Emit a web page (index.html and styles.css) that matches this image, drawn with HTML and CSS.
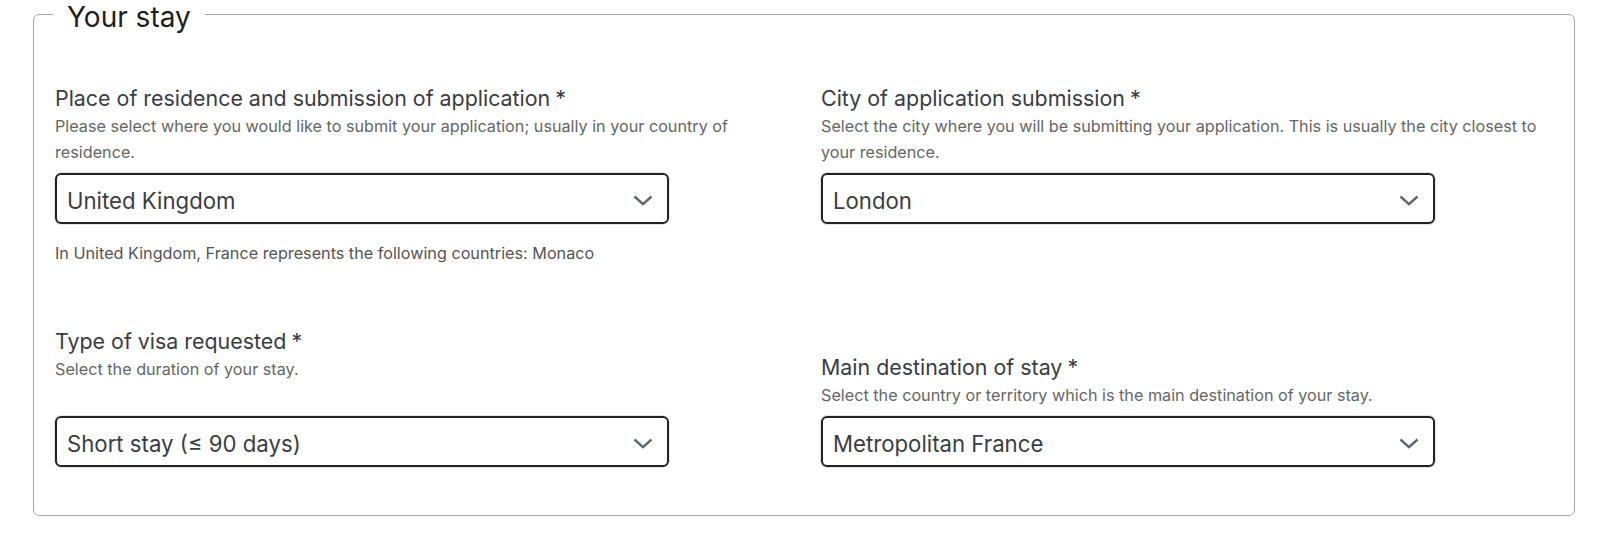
FILE: index.html
```html
<!DOCTYPE html>
<html lang="en">
<head>
<meta charset="utf-8">
<title>Your stay</title>
<link rel="stylesheet" href="styles.css">
</head>
<body>
<div class="page">
  <fieldset class="stay">
    <legend class="stay__title">Your stay</legend>
    <div class="grid">
      <div class="field">
        <label class="field__label">Place of residence and submission of application<span class="req">*</span></label>
        <p class="field__hint">Please select where you would like to submit your application; usually in your country of residence.</p>
        <div class="select">
          <span class="select__value">United Kingdom</span>
          <svg class="select__chevron" width="20" height="11" viewBox="0 0 20 11"><path d="M1.5 1.5 L10 9.2 L18.5 1.5" fill="none" stroke="currentColor" stroke-width="2.4"/></svg>
        </div>
        <p class="field__note">In United Kingdom, France represents the following countries: Monaco</p>
      </div>
      <div class="field">
        <label class="field__label">City of application submission<span class="req">*</span></label>
        <p class="field__hint">Select the city where you will be submitting your application. This is usually the city closest to your residence.</p>
        <div class="select">
          <span class="select__value">London</span>
          <svg class="select__chevron" width="20" height="11" viewBox="0 0 20 11"><path d="M1.5 1.5 L10 9.2 L18.5 1.5" fill="none" stroke="currentColor" stroke-width="2.4"/></svg>
        </div>
      </div>
      <div class="field field--end">
        <label class="field__label">Type of visa requested<span class="req">*</span></label>
        <p class="field__hint field__hint--tall">Select the duration of your stay.</p>
        <div class="select">
          <span class="select__value">Short stay (≤ 90 days)</span>
          <svg class="select__chevron" width="20" height="11" viewBox="0 0 20 11"><path d="M1.5 1.5 L10 9.2 L18.5 1.5" fill="none" stroke="currentColor" stroke-width="2.4"/></svg>
        </div>
      </div>
      <div class="field field--end">
        <label class="field__label">Main destination of stay<span class="req">*</span></label>
        <p class="field__hint">Select the country or territory which is the main destination of your stay.</p>
        <div class="select">
          <span class="select__value">Metropolitan France</span>
          <svg class="select__chevron" width="20" height="11" viewBox="0 0 20 11"><path d="M1.5 1.5 L10 9.2 L18.5 1.5" fill="none" stroke="currentColor" stroke-width="2.4"/></svg>
        </div>
      </div>
    </div>
  </fieldset>
</div>
</body>
</html>
```
FILE: styles.css
```css
html, body {
  margin: 0;
  padding: 0;
  background: #ffffff;
}

body {
  font-family: "Inter", "Noto Sans", sans-serif;
  color: #3a3a3a;
}

.page {
  padding: 0 25px 0 33px;
}

.stay {
  margin: 0;
  border: 1px solid #a9a9a9;
  border-radius: 6px;
  padding: 55px 21px 48px 21px;
  min-width: 0;
}

.stay__title {
  font-size: 28px;
  line-height: 22px;
  padding: 6px 14px 0 14px;
  margin-left: -2px;
  color: #1e1e1e;
  font-weight: 400;
}

.grid {
  display: grid;
  grid-template-columns: 766px 1fr;
  row-gap: 60px;
  align-items: start;
}

.field--end {
  align-self: end;
}

.field__label {
  display: block;
  font-size: 21.4px;
  line-height: 30px;
  color: #3a3d44;
}

.req {
  margin-left: 5px;
}

.field__hint {
  margin: 0;
  max-width: 735px;
  font-size: 16.2px;
  line-height: 26px;
  color: #666666;
}

.field__hint--tall {
  min-height: 52px;
}

.select {
  box-sizing: border-box;
  margin-top: 8px;
  width: 614px;
  height: 51px;
  border: 2px solid #222222;
  border-radius: 6px;
  box-shadow: 0 0 0 1px #e6e6e6;
  padding: 3px 14px 0 10px;
  display: flex;
  align-items: center;
  justify-content: space-between;
  font-size: 22.2px;
  color: #3a3d44;
}

.select__chevron {
  color: #5e6670;
  flex: none;
}

.field__note {
  margin: 16px 0 0 0;
  font-size: 16.2px;
  line-height: 26px;
  color: #555555;
}
```
